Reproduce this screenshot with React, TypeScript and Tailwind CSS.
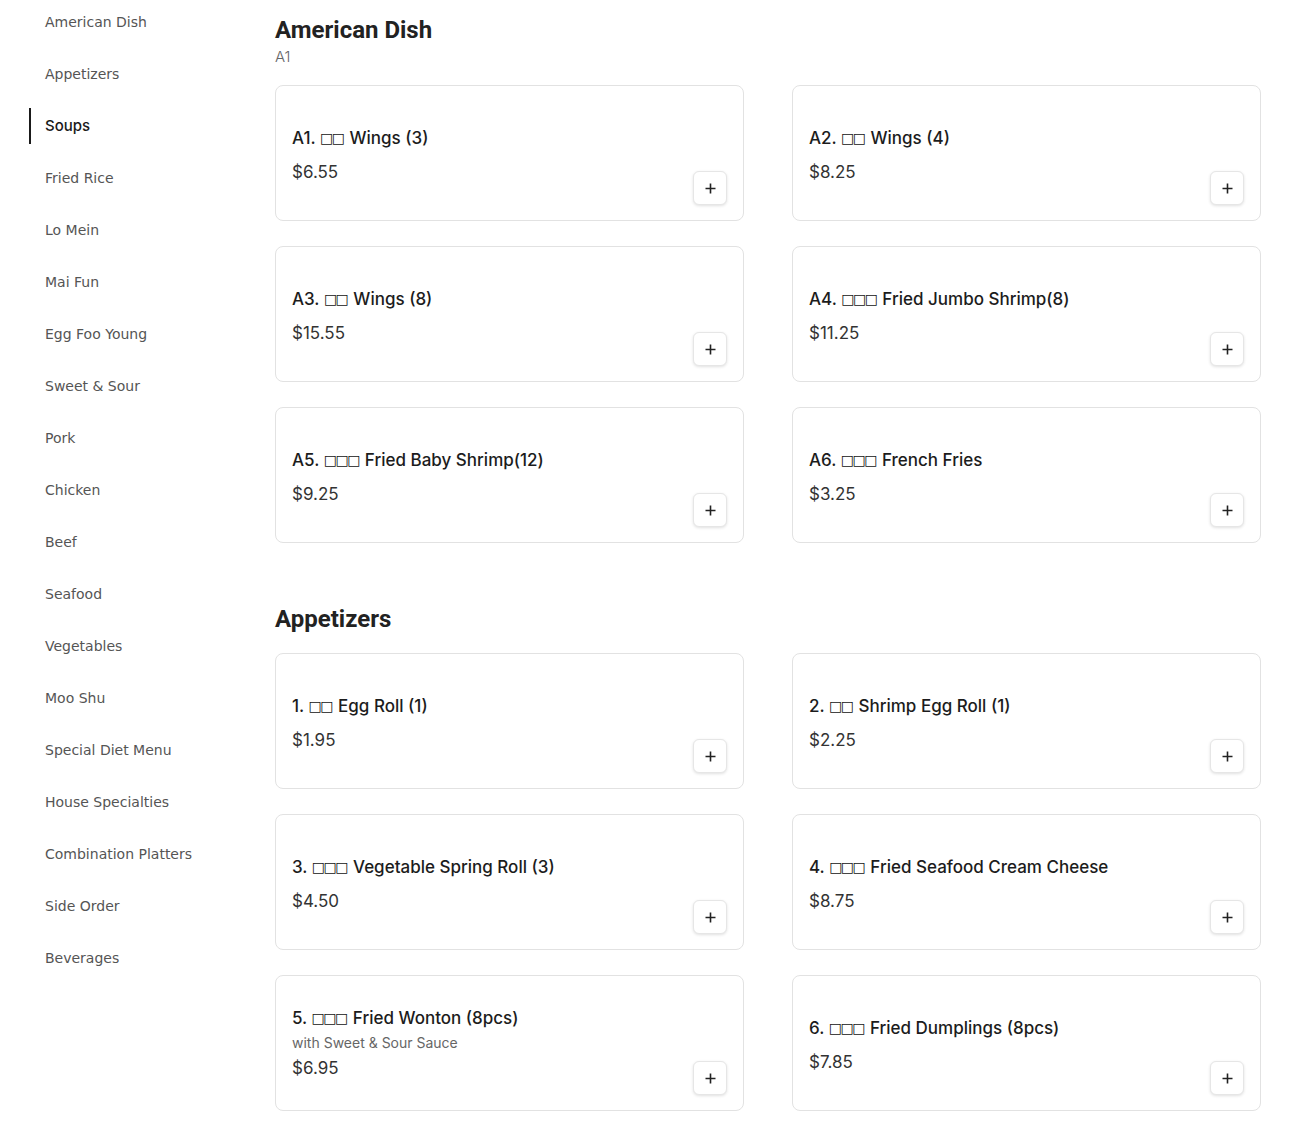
import React from 'react';

type Item = { code: string; boxes: number; name: string; price: string; note?: string };

const categories = [
  'American Dish', 'Appetizers', 'Soups', 'Fried Rice', 'Lo Mein', 'Mai Fun', 'Egg Foo Young',
  'Sweet & Sour', 'Pork', 'Chicken', 'Beef', 'Seafood', 'Vegetables', 'Moo Shu',
  'Special Diet Menu', 'House Specialties', 'Combination Platters', 'Side Order', 'Beverages',
];

const american: Item[] = [
  { code: 'A1.', boxes: 2, name: 'Wings (3)', price: '$6.55' },
  { code: 'A2.', boxes: 2, name: 'Wings (4)', price: '$8.25' },
  { code: 'A3.', boxes: 2, name: 'Wings (8)', price: '$15.55' },
  { code: 'A4.', boxes: 3, name: 'Fried Jumbo Shrimp(8)', price: '$11.25' },
  { code: 'A5.', boxes: 3, name: 'Fried Baby Shrimp(12)', price: '$9.25' },
  { code: 'A6.', boxes: 3, name: 'French Fries', price: '$3.25' },
];

const appetizers: Item[] = [
  { code: '1.', boxes: 2, name: 'Egg Roll (1)', price: '$1.95' },
  { code: '2.', boxes: 2, name: 'Shrimp Egg Roll (1)', price: '$2.25' },
  { code: '3.', boxes: 3, name: 'Vegetable Spring Roll (3)', price: '$4.50' },
  { code: '4.', boxes: 3, name: 'Fried Seafood Cream Cheese', price: '$8.75' },
  { code: '5.', boxes: 3, name: 'Fried Wonton (8pcs)', price: '$6.95', note: 'with Sweet & Sour Sauce' },
  { code: '6.', boxes: 3, name: 'Fried Dumplings (8pcs)', price: '$7.85' },
];

function Card({ item }: { item: Item }) {
  return (
    <div className="h-[136px] border border-[#e2e2e2] rounded-lg bg-white flex pl-4 pr-4 pb-[15px]">
      <div className={`flex-1 flex flex-col justify-center ${item.note ? 'pt-[15px]' : 'pt-[19px]'}`}>
        <div className="text-[17px] font-medium text-[#1c1c1c] leading-[24px] whitespace-nowrap">
          {item.code}{' '}
          <span className="relative -top-[1px] font-['DejaVu_Sans',sans-serif] text-[14px] leading-none font-bold tracking-[-1.5px] text-[#111]">{'□'.repeat(item.boxes)}</span>
          <span className="ml-[6px]">{item.name}</span>
        </div>
        {item.note && <div className="text-[14px] text-[#666] leading-[20px] mt-[3px]">{item.note}</div>}
        <div className={`text-[17px] text-[#333] leading-[24px] ${item.note ? 'mt-[3px]' : 'mt-[10px]'}`}>{item.price}</div>
      </div>
      <button className="self-end w-[34px] h-[34px] rounded-md border border-[#e6e6e6] bg-white shadow-[0_1px_3px_rgba(0,0,0,0.12)] flex items-center justify-center text-[#222]">
        <svg width="11" height="11" viewBox="0 0 11 11" fill="none" stroke="currentColor" strokeWidth="1.6">
          <path d="M5.5 0.5v10M0.5 5.5h10" />
        </svg>
      </button>
    </div>
  );
}

export default function App() {
  return (
    <div className="min-h-screen bg-white flex font-['Inter',sans-serif]">
      <aside className="w-[275px] shrink-0 pt-1 pl-[29px] flex flex-col gap-4">
        {categories.map((c) =>
          c === 'Soups' ? (
            <div key={c} className="h-9 border-l-2 border-[#1a1a1a] pl-[14px] flex items-center text-[15px] font-medium text-[#1a1a1a]">
              {c}
            </div>
          ) : (
            <div key={c} className="h-9 pl-4 flex items-center text-[14px] text-[#555] font-['DejaVu_Sans',sans-serif]">
              {c}
            </div>
          )
        )}
      </aside>
      <main className="w-[986px] pt-[14px] pb-5">
        <section>
          <h2 className="font-['Roboto',sans-serif] font-bold text-[24px] leading-[32px] text-[#222]">American Dish</h2>
          <p className="text-[15px] leading-5 text-[#666] font-light mt-[1px]">A1</p>
          <div className="grid grid-cols-2 gap-x-12 gap-y-[25px] mt-[18px]">
            {american.map((it) => <Card key={it.code} item={it} />)}
          </div>
        </section>
        <section className="mt-[60px]">
          <h2 className="font-['Roboto',sans-serif] font-bold text-[24px] leading-[32px] text-[#222]">Appetizers</h2>
          <div className="grid grid-cols-2 gap-x-12 gap-y-[25px] mt-[18px]">
            {appetizers.map((it) => <Card key={it.code} item={it} />)}
          </div>
        </section>
      </main>
    </div>
  );
}
